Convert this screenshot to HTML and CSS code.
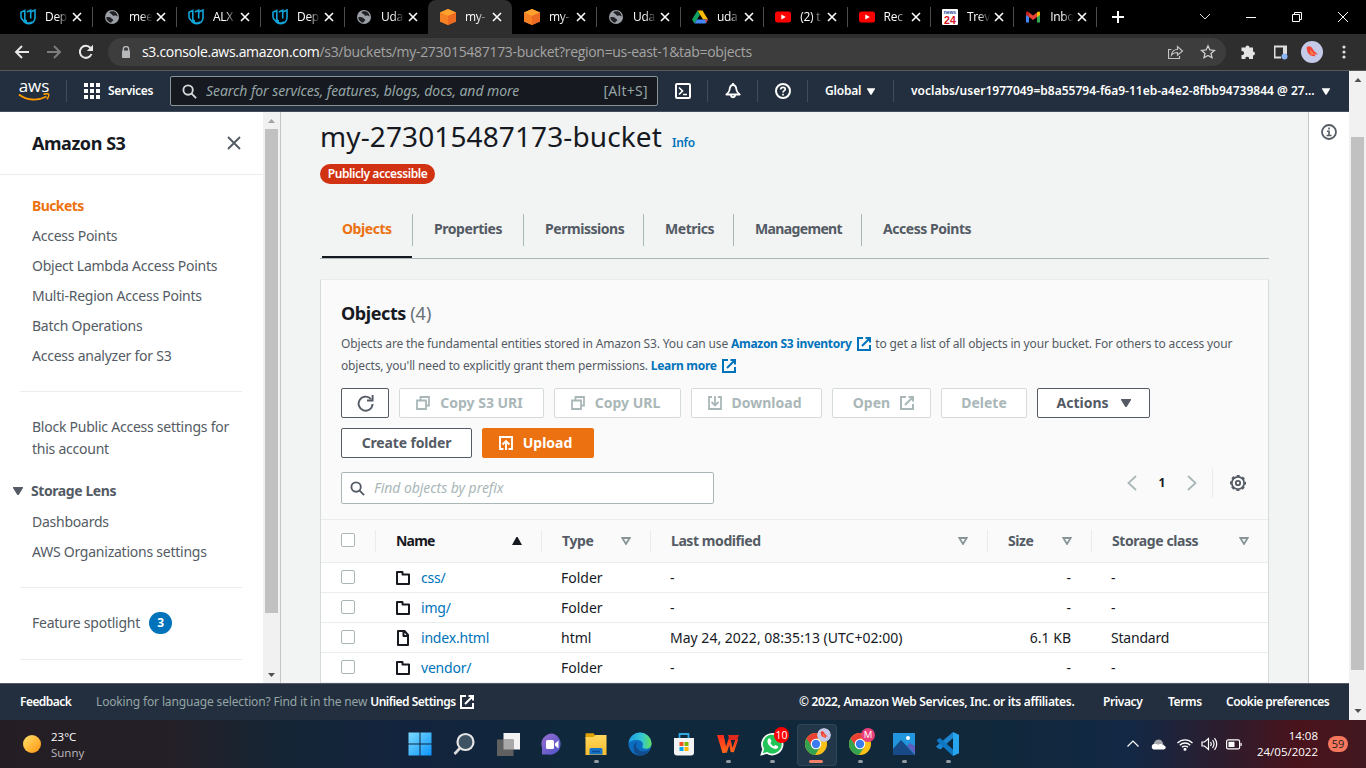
FILE: index.html
```html
<!DOCTYPE html>
<html lang="en">
<head>
<meta charset="utf-8">
<title>my-273015487173-bucket - S3 bucket</title>
<link rel="stylesheet" href="styles.css">
</head>
<body>
<svg class="defs" width="0" height="0" aria-hidden="true">
  <defs>
    <linearGradient id="gSun" x1="0" y1="0" x2="1" y2="1"><stop offset="0" stop-color="#ffe36b"/><stop offset="1" stop-color="#ff9310"/></linearGradient>
    <linearGradient id="gWin" x1="0" y1="0" x2="24" y2="24" gradientUnits="userSpaceOnUse"><stop offset="0" stop-color="#7fdcff"/><stop offset="1" stop-color="#0a93fb"/></linearGradient>
    <linearGradient id="gTeams" x1="0" y1="0" x2="1" y2="1"><stop offset="0" stop-color="#9a6fd0"/><stop offset="1" stop-color="#4b53c8"/></linearGradient>
    <linearGradient id="gEdge" x1="0" y1="0" x2="1" y2="0"><stop offset="0" stop-color="#1b9de2"/><stop offset=".6" stop-color="#36c7d0"/><stop offset="1" stop-color="#63df5a"/></linearGradient>
    <linearGradient id="gFold" x1="0" y1="0" x2="0" y2="1"><stop offset="0" stop-color="#ffd75e"/><stop offset="1" stop-color="#f9bd2c"/></linearGradient>
    <linearGradient id="gWps" x1="0" y1="0" x2="0" y2="1"><stop offset="0" stop-color="#ff2a1c"/><stop offset="1" stop-color="#ff6a1c"/></linearGradient>
  </defs>
  <symbol id="x" viewBox="0 0 10 10"><path d="M1 1l8 8M9 1l-8 8" stroke="currentColor" stroke-width="1.6" fill="none"/></symbol>
  <symbol id="uda" viewBox="0 0 16 16"><path d="M4.800 12.300C2 11 1 9.500 1 7.500V3.300L4.800 1.600V9.500c0 1.500.8 2.500 2.200 2.500M4.800 12.300c3 2.500 5.500 2 7 .5M6.800 2.900 10.700 1.200v8.300M10.700 3 15 1v7.500c0 3.500-2.500 6.200-6 6.200-3 0-5-1.500-5.800-3.500" fill="none" stroke="#12a4d9" stroke-width="1.600"/></symbol>
  <symbol id="globe" viewBox="0 0 16 16"><circle cx="8" cy="8" r="7" fill="#9aa0a6"/><path d="M6.500 2.600C5 3 5.500 4.500 7 4.800s.8 1.700 2.300 1.900 2.200-.6 3.200.4l1 .4c0-2-1-4-2.800-4.800C9.500 2.200 8 2.200 6.500 2.600zM2.300 8.300c1.700-.5 3.700-.3 4.700.4s.7 1.200 1.700 1.600.6 1.400-.4 1.900-.6 1-1 1.500C5 13.500 2.500 11.500 2.300 8.300z" fill="#202124"/></symbol>
  <symbol id="s3" viewBox="0 0 16 16"><path d="M8 0l8 3.500v9L8 16 0 12.500v-9z" fill="#f58536"/><path d="M8 0l8 3.500L8 7 0 3.500z" fill="#fca22d"/><path d="M8 7l8-3.500v9L8 16z" fill="#ec6a22"/><path d="M8 7 0 3.500v9L8 16z" fill="#f68024"/></symbol>
  <symbol id="yt" viewBox="0 0 16 16"><rect y="2.500" width="16" height="11" rx="2.500" fill="#f00"/><path d="M6.300 5.500v5L10.800 8z" fill="#fff"/></symbol>
  <symbol id="ext" viewBox="0 0 14 14"><path d="M6 1H1v12h12V8M8.500 1H13v4.500M13 1 5 9" fill="none" stroke="currentColor" stroke-width="2"/></symbol>
  <symbol id="copy" viewBox="0 0 14 14"><path d="M4.500 3.500V1H13v8.500h-2.500M1 4.500h9V13H1z" fill="none" stroke="currentColor" stroke-width="1.800"/></symbol>
  <symbol id="mag" viewBox="0 0 16 16"><circle cx="6.500" cy="6.500" r="5" fill="none" stroke="currentColor" stroke-width="2"/><path d="M10 10l5 5" stroke="currentColor" stroke-width="2"/></symbol>
  <symbol id="down" viewBox="0 0 10 8"><path d="M0 0h10v1L5.600 8H4.400L0 1z" fill="currentColor"/></symbol>
  <symbol id="sort" viewBox="0 0 10 8"><path d="M1.300 1h7.400L5 7z" fill="none" stroke="currentColor" stroke-width="1.800"/></symbol>
  <symbol id="folder" viewBox="0 0 14 14"><path d="M1 1h5.500v2.500H13V13H1z" fill="none" stroke="currentColor" stroke-width="2" stroke-linejoin="round"/></symbol>
  <symbol id="file" viewBox="0 0 14 16"><path d="M2 1h6.500L12 5v10H2zM7.500 1v5H12" fill="none" stroke="currentColor" stroke-width="2" stroke-linejoin="round"/></symbol>
  <symbol id="bird" viewBox="0 0 22 22"><circle cx="11" cy="11" r="11" fill="#c5cae9"/><path d="M5.500 6.500C7 4.500 10 5 11.500 7.500c1 2.200 2 3 5.500 6l-3.500-.3 1 2C11 15.500 7.500 14 6.500 11z" fill="#f0463a"/><path d="M9 8.500l5 5-4.500.2z" fill="#ff7a4a"/></symbol>
  <symbol id="chrome" viewBox="0 0 24 24"><circle cx="12" cy="12" r="11" fill="#fbc116"/><path d="M12 1a11 11 0 0 1 9.500 5.500H12L7 14 2.500 6.500A11 11 0 0 1 12 1z" fill="#e94235"/><path d="M2.500 6.500A11 11 0 0 0 11 23l5.500-8.500H8z" fill="#34a350"/><circle cx="12" cy="12" r="5.300" fill="#fff"/><circle cx="12" cy="12" r="4.200" fill="#3b7ded"/></symbol>
</svg>

<header class="tabstrip">
  <div class="btab"><svg class="fav"><use href="#uda"/></svg><span class="bt">Dep</span><svg class="bx"><use href="#x"/></svg></div>
  <div class="btab"><svg class="fav"><use href="#globe"/></svg><span class="bt">mee</span><svg class="bx"><use href="#x"/></svg></div>
  <div class="btab"><svg class="fav"><use href="#uda"/></svg><span class="bt">ALX</span><svg class="bx"><use href="#x"/></svg></div>
  <div class="btab"><svg class="fav"><use href="#uda"/></svg><span class="bt">Dep</span><svg class="bx"><use href="#x"/></svg></div>
  <div class="btab nosep"><svg class="fav"><use href="#globe"/></svg><span class="bt">Uda</span><svg class="bx"><use href="#x"/></svg></div>
  <div class="btab active nosep"><svg class="fav"><use href="#s3"/></svg><span class="bt">my-</span><svg class="bx"><use href="#x"/></svg></div>
  <div class="btab"><svg class="fav"><use href="#s3"/></svg><span class="bt">my-</span><svg class="bx"><use href="#x"/></svg></div>
  <div class="btab"><svg class="fav"><use href="#globe"/></svg><span class="bt">Uda</span><svg class="bx"><use href="#x"/></svg></div>
  <div class="btab n"><svg class="fav" viewBox="0 0 16 16"><path d="M5.500 1.500h5L16 10.500h-5z" fill="#fbbc05"/><path d="M5.500 1.500 0 10.500l2.500 4L8 5.700z" fill="#11a160"/><path d="M4.800 10.500H16l-2.500 4h-11z" fill="#4285f4"/><path d="M13 10.500h3l-2 3.500z" fill="#ea4335"/></svg><span class="bt">uda</span><svg class="bx"><use href="#x"/></svg></div>
  <div class="btab n"><svg class="fav"><use href="#yt"/></svg><span class="bt">(2) t</span><svg class="bx"><use href="#x"/></svg></div>
  <div class="btab n"><svg class="fav"><use href="#yt"/></svg><span class="bt">Rec</span><svg class="bx"><use href="#x"/></svg></div>
  <div class="btab n"><span class="fav n24"><i>news</i><b>24</b></span><span class="bt">Trev</span><svg class="bx"><use href="#x"/></svg></div>
  <div class="btab n"><svg class="fav" viewBox="0 0 16 16"><path d="M1 4v9.500h3V6.500z" fill="#4285f4"/><path d="M12 6.500v7h3V4z" fill="#34a853"/><path d="M4 3.500v4.500l4 3 4-3V3.500l-4 3z" fill="#ea4335"/><path d="M1 4c0-1.800 1.700-2 3-.5V8L1 6z" fill="#c5221f"/><path d="M15 4c0-1.800-1.700-2-3-.5V8l3-2z" fill="#fbbc04"/></svg><span class="bt">Inbo</span><svg class="bx"><use href="#x"/></svg></div>
  <svg class="plus" viewBox="0 0 12 12"><path d="M6 0v12M0 6h12" stroke="#fff" stroke-width="2"/></svg>
  <div class="winctl">
    <svg width="12" height="12" viewBox="0 0 12 12"><path d="M1 3l5 5 5-5" fill="none" stroke="#ddd"/></svg>
    <svg width="12" height="12" viewBox="0 0 12 12"><path d="M1 6.500h10" stroke="#fff"/></svg>
    <svg width="12" height="12" viewBox="0 0 12 12"><path d="M1.500 3.500h7v7h-7zM3.500 3.500v-2h7v7h-2" fill="none" stroke="#fff"/></svg>
    <svg width="12" height="12" viewBox="0 0 12 12"><path d="M1 1l10 10M11 1 1 11" stroke="#fff"/></svg>
  </div>
</header>

<div class="toolbar">
  <svg class="nav" viewBox="0 0 16 16"><path d="M15 8H2.500M8 2 2 8l6 6" fill="none" stroke="#e8e8e8" stroke-width="1.900"/></svg>
  <svg class="nav" viewBox="0 0 16 16"><path d="M1 8h12.500M8 2l6 6-6 6" fill="none" stroke="#7d7d7d" stroke-width="1.900"/></svg>
  <svg class="nav" viewBox="0 0 16 16"><path d="M13.500 10A6 6 0 1 1 12.500 4" fill="none" stroke="#e8e8e8" stroke-width="2"/><path d="M15 .8V7H8.800z" fill="#e8e8e8"/></svg>
  <div class="omni">
    <svg width="10" height="13" viewBox="0 0 10 13"><path d="M2.300 5V3.200a2.700 2.700 0 0 1 5.400 0V5" fill="none" stroke="#b5b7ba" stroke-width="1.400"/><rect x="1" y="4.500" width="8" height="7.500" rx=".8" fill="#b5b7ba"/></svg>
    <span class="url"><b>s3.console.aws.amazon.com</b>/s3/buckets/my-273015487173-bucket?region=us-east-1&amp;tab=objects</span>
    <svg class="share" width="16" height="16" viewBox="0 0 16 16"><path d="M3.500 5.500h-3v9h11V12M3.500 11c.5-4 3-5.500 6-5.500V2.500L14.500 7l-5 4.300V8.500c-3 0-4.500.5-6 2.500z" fill="none" stroke="#c4c4c4" stroke-width="1.200"/></svg>
    <svg width="16" height="16" viewBox="0 0 16 16"><path d="M8 1.800l1.900 4.200 4.500.400-3.400 3 1 4.400L8 11.500l-4 2.300 1-4.400-3.400-3L6.100 6z" fill="none" stroke="#cfcfcf" stroke-width="1.300"/></svg>
  </div>
  <div class="exts">
    <svg width="16" height="16" viewBox="0 0 16 16"><path d="M1.500 3.500h4a2 2 0 1 1 4 0h3.500v4a2 2 0 1 1 0 4v3.500h-4a1.800 1.800 0 1 0-3.500 0h-4V11a2 2 0 1 0 0-3.800z" fill="#e3e3e3"/></svg>
    <svg width="16" height="16" viewBox="0 0 16 16"><path d="M2 1.500h13V10h-4V3.500H3.500v9H9v2H2z" fill="#dedede"/><circle cx="12.500" cy="12.500" r="3" fill="#8ab4f8"/></svg>
    <svg width="22" height="22"><use href="#bird"/></svg>
    <svg width="4" height="14" viewBox="0 0 4 14" fill="#dedede"><circle cx="2" cy="2" r="1.600"/><circle cx="2" cy="7" r="1.600"/><circle cx="2" cy="12" r="1.600"/></svg>
  </div>
</div>

<div class="page">
 <div class="app">
  <nav class="aws">
    <span class="logo"><em>aws</em><svg width="32" height="9" viewBox="0 0 32 9"><path d="M1 1.500C9 7.800 20 8 28.500 3.500" fill="none" stroke="#f90" stroke-width="1.900"/><path d="M25.500 1.200c2-.6 4-.7 5-.2.600 1-.2 3.700-1.700 5.300" fill="none" stroke="#f90" stroke-width="1.500"/></svg></span>
    <i class="vs"></i>
    <svg class="dots" width="16" height="16" viewBox="0 0 16 16" fill="#fff"><path d="M0 0h4v4H0zM6 0h4v4H6zM12 0h4v4h-4zM0 6h4v4H0zM6 6h4v4H6zM12 6h4v4h-4zM0 12h4v4H0zM6 12h4v4H6zM12 12h4v4h-4z"/></svg>
    <span class="svc">Services</span>
    <div class="asearch"><svg width="15" height="15"><use href="#mag"/></svg><span class="ph">Search for services, features, blogs, docs, and more</span><span class="kb">[Alt+S]</span></div>
    <svg class="shell" width="16" height="16" viewBox="0 0 16 16" fill="none" stroke="#fff" stroke-width="2"><rect x="1" y="1" width="14" height="14" rx="1"/><path d="M4 4.500 7.500 8 4 11.500M8 11.500h4" stroke-width="1.700"/></svg>
    <i class="vs v2"></i>
    <svg class="bell" width="16" height="16" viewBox="0 0 16 16" fill="none" stroke="#fff" stroke-width="1.800"><path d="M8 0v2M8 2C5.800 2 4.800 3.800 4.500 7 4.300 9 3 10 1.300 11.500h13.400C13 10 11.700 9 11.500 7 11.200 3.800 10.200 2 8 2zM5.800 12.500c.5 2.300 3.900 2.300 4.400 0" stroke-linejoin="round"/></svg>
    <i class="vs v2"></i>
    <svg class="help" width="16" height="16" viewBox="0 0 16 16" fill="none" stroke="#fff" stroke-width="2"><circle cx="8" cy="8" r="7"/><path d="M5.700 6.500c0-3 4.600-2.800 4.600-.3C10.300 7.500 8 7.800 8 9.500M8 10.800v1.700" stroke-width="1.700"/></svg>
    <i class="vs v2"></i>
    <span class="glob">Global</span><svg class="car" width="8" height="7"><use href="#down"/></svg>
    <i class="vs v3"></i>
    <span class="usr">voclabs/user1977049=b8a55794-f6a9-11eb-a4e2-8fbb94739844 @ 27...</span><svg class="car" width="8" height="7"><use href="#down"/></svg>
  </nav>

  <div class="body">
    <aside class="side">
      <div class="shead"><h2>Amazon S3</h2><svg width="14" height="14" viewBox="0 0 14 14"><path d="M1 1l12 12M13 1 1 13" stroke="#545b64" stroke-width="1.900"/></svg></div>
      <ul class="g1"><li class="on">Buckets</li><li>Access Points</li><li>Object Lambda Access Points</li><li>Multi-Region Access Points</li><li>Batch Operations</li><li>Access analyzer for S3</li></ul>
      <hr>
      <p class="block">Block Public Access settings for<br>this account</p>
      <div class="lens"><svg width="10" height="8"><use href="#down"/></svg><b>Storage Lens</b></div>
      <ul><li>Dashboards</li><li>AWS Organizations settings</li></ul>
      <hr>
      <div class="feat">Feature spotlight<span>3</span></div>
      <hr>
    </aside>
    <div class="sb inner"><svg width="7" height="4" viewBox="0 0 7 4"><path d="M0 4 3.500 0 7 4z" fill="#a3a3a3"/></svg><i class="thumb"></i><svg width="7" height="4" viewBox="0 0 7 4"><path d="M0 0l3.500 4L7 0z" fill="#505050"/></svg></div>

    <main class="main">
      <div class="title"><h1>my-273015487173-bucket</h1><a>Info</a></div>
      <span class="pub">Publicly accessible</span>
      <div class="tabs"><span class="t1 on">Objects</span><span class="t2">Properties</span><span class="t3">Permissions</span><span class="t4">Metrics</span><span class="t5">Management</span><span class="t6">Access Points</span></div>
      <section class="panel">
        <div class="phead">
          <h3>Objects <span>(4)</span></h3>
          <div class="desc"><div class="l1">Objects are the fundamental entities stored in Amazon S3. You can use <b>Amazon S3 inventory <svg width="14" height="14"><use href="#ext"/></svg></b> to get a list of all objects in your bucket. For others to access your</div><div class="l2">objects, you'll need to explicitly grant them permissions. <b>Learn more <svg width="14" height="14"><use href="#ext"/></svg></b></div></div>
          <div class="btns">
            <span class="b w1"><svg width="17" height="17" viewBox="0 0 17 17" fill="none" stroke="currentColor" stroke-width="1.900"><path d="M15.600 9A7 7 0 1 1 14 4.200"/><path d="M15.600 0v5.500H10"/></svg></span>
            <span class="b off w2"><svg width="14" height="14"><use href="#copy"/></svg>Copy S3 URI</span>
            <span class="b off w3"><svg width="14" height="14"><use href="#copy"/></svg>Copy URL</span>
            <span class="b off w4"><svg width="14" height="14" viewBox="0 0 14 14" fill="none" stroke="currentColor" stroke-width="1.800"><path d="M4 1H1v12h12V1h-3M7 0v9M3.500 6 7 9.500 10.500 6"/></svg>Download</span>
            <span class="b off w5">Open<svg width="14" height="14"><use href="#ext"/></svg></span>
            <span class="b off w6">Delete</span>
            <span class="b w7">Actions<svg width="10" height="8"><use href="#down"/></svg></span>
          </div>
          <div class="btns r2">
            <span class="b w8">Create folder</span>
            <span class="b up w9"><svg width="14" height="14" viewBox="0 0 14 14" fill="none" stroke="currentColor" stroke-width="1.900"><path d="M4.500 13H1V1h12v12H9.500M7 14V5M3.500 8.500 7 5l3.500 3.500"/></svg>Upload</span>
          </div>
          <div class="filter">
            <div class="find"><svg width="15" height="15"><use href="#mag"/></svg><span>Find objects by prefix</span></div>
            <div class="pager"><svg width="10" height="16" viewBox="0 0 10 16"><path d="M9 1 1.500 8 9 15" fill="none" stroke="#aab7b8" stroke-width="1.800"/></svg><b>1</b><svg width="10" height="16" viewBox="0 0 10 16"><path d="M1 1l7.500 7L1 15" fill="none" stroke="#aab7b8" stroke-width="1.800"/></svg><i></i><svg width="16" height="16" viewBox="0 0 16 16" fill="none" stroke="#545b64"><circle cx="8" cy="8" r="6.200" stroke-width="1.800"/><circle cx="8" cy="8" r="7.300" stroke-width="1.500" stroke-dasharray="3.060 2.670" stroke-dashoffset="1.500"/><circle cx="8" cy="8" r="2.200" stroke-width="1.800"/></svg></div>
          </div>
        </div>
        <div class="row th"><span class="c0"><i class="cb"></i></span><span class="h blk">Name<svg width="10" height="8" viewBox="0 0 10 8"><path d="M0 8h10L5.600 0H4.400z" fill="#16191f"/></svg></span><span class="h">Type<svg width="10" height="8"><use href="#sort"/></svg></span><span class="h">Last modified<svg width="10" height="8"><use href="#sort"/></svg></span><span class="h">Size<svg width="10" height="8"><use href="#sort"/></svg></span><span class="h">Storage class<svg width="10" height="8"><use href="#sort"/></svg></span></div>
        <div class="row"><span class="c0"><i class="cb"></i></span><span class="nm"><svg width="14" height="14"><use href="#folder"/></svg>css/</span><span>Folder</span><span>-</span><span class="sz">-</span><span>-</span></div>
        <div class="row"><span class="c0"><i class="cb"></i></span><span class="nm"><svg width="14" height="14"><use href="#folder"/></svg>img/</span><span>Folder</span><span>-</span><span class="sz">-</span><span>-</span></div>
        <div class="row"><span class="c0"><i class="cb"></i></span><span class="nm"><svg width="14" height="16"><use href="#file"/></svg>index.html</span><span>html</span><span class="dt">May 24, 2022, 08:35:13 (UTC+02:00)</span><span class="sz">6.1 KB</span><span class="sc">Standard</span></div>
        <div class="row"><span class="c0"><i class="cb"></i></span><span class="nm"><svg width="14" height="14"><use href="#folder"/></svg>vendor/</span><span>Folder</span><span>-</span><span class="sz">-</span><span>-</span></div>
      </section>
    </main>
    <aside class="right"><svg width="16" height="16" viewBox="0 0 16 16" fill="none" stroke="#545b64" stroke-width="1.800"><circle cx="8" cy="8" r="7"/><path d="M8 3.500v2M6 7.200h2v4M5.500 11.500h5" stroke-width="1.600"/></svg></aside>
  </div>

  <footer class="foot">
    <b class="f1">Feedback</b><span class="f2">Looking for language selection? Find it in the new <b>Unified Settings</b></span><svg width="14" height="14"><use href="#ext"/></svg>
    <span class="f3">© 2022, Amazon Web Services, Inc. or its affiliates.</span><span class="f4">Privacy</span><span class="f5">Terms</span><span class="f6">Cookie preferences</span>
  </footer>
 </div>
 <div class="sb outer"><svg width="8" height="4" viewBox="0 0 7 4"><path d="M0 4 3.500 0 7 4z" fill="#505050"/></svg><i class="thumb"></i><svg width="8" height="4" viewBox="0 0 7 4"><path d="M0 0l3.500 4L7 0z" fill="#505050"/></svg></div>
</div>

<div class="task">
  <div class="weather"><svg width="18" height="18"><circle cx="9" cy="9" r="9" fill="url(#gSun)"/></svg><div><span>23°C</span><span class="dim">Sunny</span></div></div>
  <div class="apps">
    <span><svg width="24" height="24" viewBox="0 0 24 24" fill="url(#gWin)"><path d="M.5.5h11v11H.5zM12.500.5h11v11h-11zM.5 12.500h11v11H.5zM12.500 12.500h11v11h-11z"/></svg></span>
    <span><svg width="24" height="24" viewBox="0 0 24 24"><circle cx="13.500" cy="10" r="8" fill="#3d5263" stroke="#e6e6e6" stroke-width="2.200"/><path d="M8 16l-5.500 6" stroke="#ddd" stroke-width="2.600"/></svg></span>
    <span><svg width="24" height="24" viewBox="0 0 24 24"><path d="M7.500 1H24v16.500H7.500z" fill="#f2f2f2"/><path d="M1 7.500h16.500V24H1z" fill="#606060"/><path d="M7.500 7.500h10v10h-10z" fill="#a8a8a8"/></svg></span>
    <span><svg width="24" height="24" viewBox="0 0 24 24"><path d="M12 1.500A10.500 10.500 0 1 1 8 22.500H2v-7A10.500 10.500 0 0 1 12 1.500z" fill="url(#gTeams)"/><rect x="6" y="8" width="8" height="9" rx="1.500" fill="#fff"/><path d="M15 11.500l3.500-3v8l-3.500-3z" fill="#fff"/></svg></span>
    <span class="run"><svg width="24" height="24" viewBox="0 0 24 24"><path d="M1.500 2.500c0-1 .5-1.200 1-1.200h7l2 2.500v3h-10z" fill="#e0a100"/><path d="M1.500 5h8l2-2h11v20h-21z" fill="url(#gFold)"/><path d="M5.500 22.500V18c0-1.500.8-2 2-2h9c1.200 0 2 .5 2 2v4.500z" fill="#1673c8"/><path d="M8 19.500h8" stroke="#0a4c96" stroke-width="1.500"/></svg></span>
    <span><svg width="24" height="24" viewBox="0 0 24 24"><circle cx="12" cy="12" r="11.500" fill="#0c6cc0"/><path d="M.6 11A11.500 11.500 0 0 1 23.500 11c.3 4-2.500 5.800-5.500 5.800-2.500 0-4.200-1-3.500-2.300 1-2 .3-5.500-3.500-6.200-4.500-.8-8 .5-10.400 2.700z" fill="url(#gEdge)"/><path d="M9 9.500c-2.500 4.500.5 9.500 5.500 10 3 .2 5-.8 7-2-2 4.300-6.500 6.500-10.500 5.800C5 22 3.500 13 9 9.500z" fill="#124c8c"/></svg></span>
    <span><svg width="24" height="24" viewBox="0 0 24 24"><path d="M7.500 6V2h9v4" fill="none" stroke="#2fa8e0" stroke-width="1.800"/><path d="M2 6h20v14.500c0 2-1 3-3 3H5c-2 0-3-1-3-3z" fill="#f3f3f3"/><path d="M7.500 10h4v4h-4z" fill="#f25022"/><path d="M12.500 10h4v4h-4z" fill="#7fba00"/><path d="M7.500 15h4v4h-4z" fill="#00a4ef"/><path d="M12.500 15h4v4h-4z" fill="#ffb900"/></svg></span>
    <span class="run"><svg width="24" height="24" viewBox="0 0 24 24"><path d="M2.500 4.500h4L9 19M9.500 20.500 13.500 8l2.500 12M16.500 20 21 7" fill="none" stroke="url(#gWps)" stroke-width="2.600"/><path d="M1 3h6.500l2.500 12-1 6H6.500z" fill="url(#gWps)"/><path d="M12 3h11l-2 5h-7.500z" fill="#e0281c"/></svg></span>
    <span class="run"><svg width="24" height="24" viewBox="0 0 24 24"><path d="M1.500 22.500 3.200 17A10.300 10.300 0 1 1 7 21z" fill="#21c458" stroke="#fff" stroke-width="1.700"/><path d="M8.500 6.500c-3 2.500.5 10 7.500 10.500 2-.2 2.500-1.800 2-2.700l-2.700-1.300-1.400 1.300c-1.500-.5-3-2-3.500-3.500l1.100-1.300-1.200-3z" fill="#fff"/></svg><i class="bdg red">10</i></span>
    <span class="run cur"><svg width="24" height="24"><use href="#chrome"/></svg><svg class="bdg av"><use href="#bird"/></svg></span>
    <span class="run"><svg width="24" height="24"><use href="#chrome"/></svg><i class="bdg pink">M</i></span>
    <span class="run"><svg width="24" height="24" viewBox="0 0 24 24"><path d="M1 1h22v22H1z" fill="#2196dc"/><path d="M23 14l-5-3-3 3 8 8z" fill="#5b5fc0"/><path d="M1 17 9 8l14 15H1z" fill="#174a86"/><circle cx="16" cy="6" r="2" fill="#fff"/></svg></span>
    <span class="run"><svg width="24" height="24" viewBox="0 0 24 24"><path d="M17 0v6L4.500 17.500 1.500 16 0 14.500z" fill="#1b86cf"/><path d="M1.500 7.200 4 6l13 11.500V24L.8 9z" fill="#0f76c4"/><path d="M17 0l6 2.800v18.400L17 24z" fill="#27a5ef"/></svg></span>
  </div>
  <div class="tray">
    <svg width="12" height="8" viewBox="0 0 12 8"><path d="M.5 6.500 6 1l5.500 5.500" fill="none" stroke="#fff" stroke-width="1.200"/></svg>
    <svg width="16" height="12" viewBox="0 0 16 12"><path d="M4 6a4.500 4.500 0 0 1 8.500-2l1.500 4H4z" fill="#a8a9ae"/><path d="M3.500 11.500a3 3 0 0 1 0-5.500c2-.5 3 0 4.500.8 2-1.300 4-1 5 .5 3.500 0 3.500 4.200.5 4.200z" fill="#fff"/></svg>
    <svg width="16" height="13" viewBox="0 0 16 13" fill="none" stroke="#fff" stroke-width="1.300"><path d="M.5 5a10.500 10.500 0 0 1 15 0M2.800 7.200a7.300 7.300 0 0 1 10.400 0M5 9.300a4.200 4.200 0 0 1 6 0"/><circle cx="8" cy="11.300" r=".9" fill="#fff"/></svg>
    <svg width="17" height="14" viewBox="0 0 17 14" fill="none" stroke="#fff" stroke-width="1.200"><path d="M1 5h2.500L7.500 1.500v11L3.500 9H1zM9.500 5q1.500 2 0 4M11.500 3q3 4 0 8M13.500 1.200q4.500 5.800 0 11.600"/></svg>
    <svg width="16" height="11" viewBox="0 0 16 11"><rect x=".6" y=".9" width="13" height="9" rx="1.500" fill="none" stroke="#fff" stroke-width="1.200"/><path d="M2.500 2.800h6v5.200h-6zM14.500 4h1.200v3h-1.200z" fill="#fff"/></svg>
    <div class="clock"><span>14:08</span><span>24/05/2022</span></div>
    <span class="cnt">59</span>
  </div>
</div>
</body>
</html>
```
FILE: styles.css
```css
* { box-sizing: border-box; }
body { margin: 0; width: 1366px; height: 768px; overflow: hidden; font: 14px/22px "Noto Sans", "Open Sans", sans-serif; color: #16191f; display: flex; flex-direction: column; }
ul { list-style: none; margin: 0; padding: 0; }
h1, h2, h3, p { margin: 0; }
svg { flex: none; display: block; }
span { white-space: nowrap; }
.defs { position: absolute; }

/* browser tabs */
.tabstrip { height: 34px; background: #000; display: flex; align-items: center; padding-left: 8px; flex: none; }
.btab { width: 84px; height: 34px; flex: none; display: flex; align-items: center; padding-left: 12px; position: relative; color: #fff; }
.btab.n { width: 83.300px; }
.btab:not(.nosep)::after { content: ""; position: absolute; right: -1px; top: 7px; width: 1px; height: 20px; background: #4c4c4c; }
.btab.active { background: #2e2e2e; border-radius: 8px 8px 0 0; }
.fav { width: 16px; height: 16px; flex: none; }
.n24 { background: #fff; border-radius: 1px; display: flex; flex-direction: column; align-items: center; }
.n24 i { font: bold 5px/6px "Liberation Sans", sans-serif; color: #1d3d8f; }
.n24 b { font: bold 10.5px/10px "Liberation Sans", sans-serif; color: #d9121f; }
.bt { font: 12px/16px "Open Sans", sans-serif; letter-spacing: -.3px; width: 24px; margin-left: 9px; -webkit-mask-image: linear-gradient(90deg, #000 50%, transparent 98%); }
.bx { width: 10px; height: 10px; margin-left: 3px; }
.plus { width: 12px; height: 12px; margin-left: 16px; }
.winctl { display: flex; margin-left: auto; gap: 34px; padding-right: 17px; height: 28px; align-items: center; }

.toolbar { height: 37px; flex: none; background: #2e2e2e; border-bottom: 1px solid #58595b; display: flex; align-items: center; padding-left: 14px; }
.nav { width: 16px; height: 16px; margin-right: 16px; }
.omni { width: 1118px; height: 28px; border-radius: 14px; background: #3d3d3d; display: flex; align-items: center; padding: 0 10px 0 13px; margin-left: -2px; }
.url { font: 14px/20px "Open Sans", sans-serif; color: #a4a4a4; margin-left: 11px; letter-spacing: -.305px; }
.url b { font-weight: 400; color: #fff; }
.share { margin-left: auto; margin-right: 16px; }
.exts { display: flex; align-items: center; margin-left: 14px; }
.exts svg:nth-child(2) { margin-left: 16px; }
.exts svg:nth-child(3) { margin-left: 13px; }
.exts svg:nth-child(4) { margin-left: 19px; }

.page { height: 649px; display: flex; flex: none; }
.app { width: 1349px; display: flex; flex-direction: column; }

/* console header */
.aws { height: 41px; background: #232f3e; border-bottom: 1px solid #414d5c; display: flex; align-items: center; color: #fff; font-size: 12px; font-weight: 600; padding-left: 18px; flex: none; }
.logo { width: 32px; display: flex; flex-direction: column; align-items: center; }
.logo em { font: 500 17px/14px "Open Sans", sans-serif; height: 14px; margin-top: -2px; letter-spacing: 0; }
.vs { width: 1px; height: 22px; background: #414d5c; margin-left: 16px; }
.dots { margin-left: 17px; }
.svc { margin-left: 8px; width: 62px; letter-spacing: -.350px; }
.asearch { width: 488px; height: 30px; border: 1px solid #879596; border-radius: 2px; background: #16191f; display: flex; align-items: center; padding: 0 9px 0 11px; color: #95a5a6; font-weight: 400; font-size: 14px; }
.asearch svg { color: #d5dbdb; }
.ph { font-style: italic; margin-left: 9px; letter-spacing: -.070px; }
.kb { margin-left: auto; letter-spacing: .3px; }
.shell { margin-left: 17px; }
.v2 { margin-left: 16px; }
.bell, .help { margin-left: 17px; }
.glob { margin-left: 17px; width: 42px; letter-spacing: -.2px; }
.v3 { margin-left: 18px; }
.usr { margin-left: 17px; width: 411px; }

.body { height: 571px; display: flex; flex: none; }
.side { width: 263px; background: #fff; color: #545b64; overflow: hidden; letter-spacing: -.240px; }
.shead { height: 63px; border-bottom: 1px solid #eaeded; display: flex; justify-content: space-between; align-items: center; padding: 0 22px 0 32px; }
.shead h2 { font-size: 18px; color: #16191f; font-weight: 700; letter-spacing: -.450px; padding-bottom: 1px; }
.side li { height: 30px; line-height: 30px; padding-left: 32px; }
.g1 { padding-top: 16px; }
.side li.on { color: #ec7211; font-weight: 700; letter-spacing: -.600px; }
.side hr { border: 0; height: 1px; background: #eaeded; margin: 20px 21px 0 20px; }
.block { padding: 24px 0 0 32px; }
.lens { display: flex; align-items: center; padding-left: 13px; gap: 8px; height: 30px; margin: 16px 0 1px; letter-spacing: -.420px; }
.feat { display: flex; align-items: center; height: 30px; margin: 20px 0 21px; padding-left: 32px; }
.feat span { background: #0073bb; color: #fff; width: 23px; height: 22px; border-radius: 11px; font-weight: 700; font-size: 12px; text-align: center; margin-left: 9px; }

.sb { background: #f1f1f1; display: flex; flex-direction: column; align-items: center; justify-content: space-between; width: 17px; }
.thumb { width: 13px; background: #c1c1c1; }
.inner { width: 18px; padding: 7px 1px 6px 0; background: linear-gradient(90deg, #f1f1f1 17px, #c3c7c7 17px); }
.inner .thumb { height: 484px; margin: 6px 0 auto; }
.outer { padding: 7px 0; }
.outer .thumb { height: 533px; margin: 55px 0 auto; }

.main { width: 1027px; background: #f2f3f3; padding-left: 39px; overflow: hidden; }
.title { display: flex; height: 52px; align-items: baseline; line-height: 49px; }
.title h1 { font-size: 28px; font-weight: 400; letter-spacing: .110px; }
.title a { color: #0073bb; font-weight: 600; font-size: 12px; margin-left: 10px; letter-spacing: -.2px; }
.pub { display: block; width: 115px; height: 20px; border-radius: 10px; background: #d13212; color: #fff; font-weight: 600; font-size: 12px; line-height: 20px; text-align: center; letter-spacing: -.430px; }
.tabs { width: 949px; height: 74px; border-bottom: 1px solid #aab7b8; display: flex; padding: 29px 0 0 2px; font-weight: 700; color: #545b64; margin-top: 1px; letter-spacing: -.450px; }
.tabs span { height: 32px; line-height: 30px; border-right: 1px solid #aab7b8; padding-left: 21px; }
.tabs .t1 { width: 91px; padding-left: 20px; color: #ec7211; background: linear-gradient(#16191f, #16191f) 0 42px / 90px 2px no-repeat; height: 44px; border: 0; }
.tabs .t2 { border-left: 1px solid #aab7b8; margin-left: -1px; width: 112px; }
.t3 { width: 120px; }
.t4 { width: 90px; }
.tabs .t5 { width: 128px; letter-spacing: -.650px; }
.tabs .t6 { border: 0; }
.panel { width: 949px; margin-top: 20px; border: 1px solid #d5dbdb; border-top-color: #eaeded; background: #fff; height: 420px; }
.phead { background: #fafafa; height: 240px; padding: 19px 20px 0; border-bottom: 1px solid #eaeded; }
.phead h3 { font-size: 18px; line-height: 28px; letter-spacing: -.420px; }
.phead h3 span { font-weight: 400; color: #687078; letter-spacing: 0; }
.desc { font-size: 12px; color: #545b64; margin-top: 6px; letter-spacing: -.155px; }
.desc div { white-space: nowrap; }
.desc b { color: #0073bb; letter-spacing: -.300px; }
.desc svg { display: inline-block; vertical-align: -3px; margin: 0 1px 0 3px; }
.btns { display: flex; gap: 10px; margin-top: 11px; }
.r2 { margin-top: 10px; }
.b { height: 30px; border: 1px solid #545b64; border-radius: 2px; background: #fff; color: #545b64; font-weight: 700; display: flex; align-items: center; justify-content: center; gap: 10px; }
.off { border-color: #d5dbdb; color: #aab7b8; }
.up { background: #ec7211; border-color: #ec7211; color: #fff; padding-right: 5px; }
.w1 { width: 48px; } .w2 { width: 145px; padding-right: 4px; } .w3 { width: 127px; padding-right: 4px; } .w4 { width: 131px; padding-right: 4px; } .w5 { width: 99px; padding-left: 4px; } .w6 { width: 86px; } .w7 { width: 113px; } .w8 { width: 131px; letter-spacing: -.150px; } .w9 { width: 112px; }
.w7 { gap: 12px; }
.filter { display: flex; justify-content: space-between; margin-top: 14px; }
.find { width: 373px; height: 32px; border: 1px solid #aab7b8; border-radius: 2px; background: #fff; display: flex; align-items: center; padding-left: 8px; gap: 9px; color: #545b64; }
.find span { font-style: italic; color: #aab7b8; letter-spacing: -.050px; }
.pager { display: flex; align-items: center; height: 22px; }
.pager b { font-size: 12px; width: 50px; text-align: center; }
.pager i { width: 1px; height: 30px; background: #eaeded; margin: 0 17px 0 15px; }
.pager svg:last-child { margin-right: 2px; }
.row { display: grid; grid-template-columns: 54px 166px 109px 337px 104px 177px; height: 30px; border-bottom: 1px solid #eaeded; align-items: center; }
.row > span { padding-left: 20px; }
.row > .sz { text-align: right; padding: 0 20px 0 0; }
.row .dt { letter-spacing: .010px; }
.row .sc { letter-spacing: -.200px; }
.th { height: 43px; background: #fafafa; }
.row .h { display: flex; align-items: center; justify-content: space-between; height: 22px; border-left: 1px solid #eaeded; font-weight: 700; color: #545b64; padding-right: 19px; letter-spacing: -.420px; }
.row .h svg { color: #879596; }
.row .blk { color: #16191f; letter-spacing: -.800px; }
.cb { display: block; width: 14px; height: 14px; border: 1px solid #aab7b8; border-radius: 2px; background: #fff; margin-top: -2px; }
.row .nm { display: flex; align-items: center; color: #0073bb; gap: 11px; padding-left: 21px; letter-spacing: -.200px; }
.nm svg { color: #16191f; }

.right { width: 41px; background: #fff; border-left: 1px solid #c3c7c7; padding: 12px 0 0 12px; }

.foot { height: 37px; background: #232f3e; border-top: 1px solid #545b64; display: flex; align-items: center; color: #fff; font-size: 12px; font-weight: 600; padding-left: 20px; letter-spacing: -.400px; }
.foot b { font-weight: 600; }
.foot .f1 { width: 76px; letter-spacing: -.550px; }
.f2 { color: #95a5a6; font-weight: 400; width: 364px; letter-spacing: -.150px; }
.f2 b { color: #fff; letter-spacing: -.500px; }
.f3 { margin-left: 325px; width: 304px; letter-spacing: -.330px; }
.f4 { width: 65px; } .f5 { width: 58px; }
.f6 { letter-spacing: -.530px; }

.task { height: 48px; flex: none; display: grid; grid-template-columns: 398px 572px 1fr; color: #fff; background: linear-gradient(90deg, #241d24 0, #241f27 170px, #142636 290px, #12233d 400px, #10283b 560px, #10283a 980px, #122845 1130px, #2c1d2e 1220px, #4a131c 1300px, #421820 1366px); font: 12px/16px "Open Sans", sans-serif; }
.weather { display: flex; align-items: center; padding-left: 23px; gap: 10px; }
.weather div { display: flex; flex-direction: column; font-size: 11.500px; padding-top: 1px; }
.weather .dim { color: #bdb9bd; }
.apps { display: flex; }
.apps > span { width: 44px; height: 48px; display: flex; align-items: center; justify-content: center; position: relative; }
.run::after { content: ""; position: absolute; left: 20px; top: 40px; width: 5px; height: 3px; border-radius: 2px; background: #929ba3; }
.cur::before { content: ""; position: absolute; left: 3px; top: 4px; width: 38px; height: 40px; border-radius: 4px; background: rgba(255,255,255,.08); border: 1px solid rgba(255,255,255,.07); }
.cur::after { width: 14px; left: 15px; background: #f0806a; }
.cur > svg { position: relative; }
.bdg { position: absolute; left: 23px; top: 8px; width: 14px; height: 14px; border-radius: 50%; text-align: center; font: 9.500px/14px "Open Sans", sans-serif; }
.cur > .bdg.av { position: absolute; }
.red { background: #f00; left: 24px; top: 7px; width: 15px; height: 16px; font-size: 10.500px; line-height: 16px; }
.pink { background: #e8407a; }
.tray { display: flex; align-items: center; justify-content: flex-end; padding-right: 18px; }
.tray svg { margin-right: 11px; }
.tray svg:nth-child(4), .tray svg:nth-child(3) { margin-right: 8px; }
.clock { display: flex; flex-direction: column; text-align: right; width: 65px; font-size: 11.500px; }
.cnt { width: 20px; height: 16px; border-radius: 8px; background: #f4775e; color: #1c1c1c; font-size: 11px; text-align: center; margin-left: 10px; }
```
